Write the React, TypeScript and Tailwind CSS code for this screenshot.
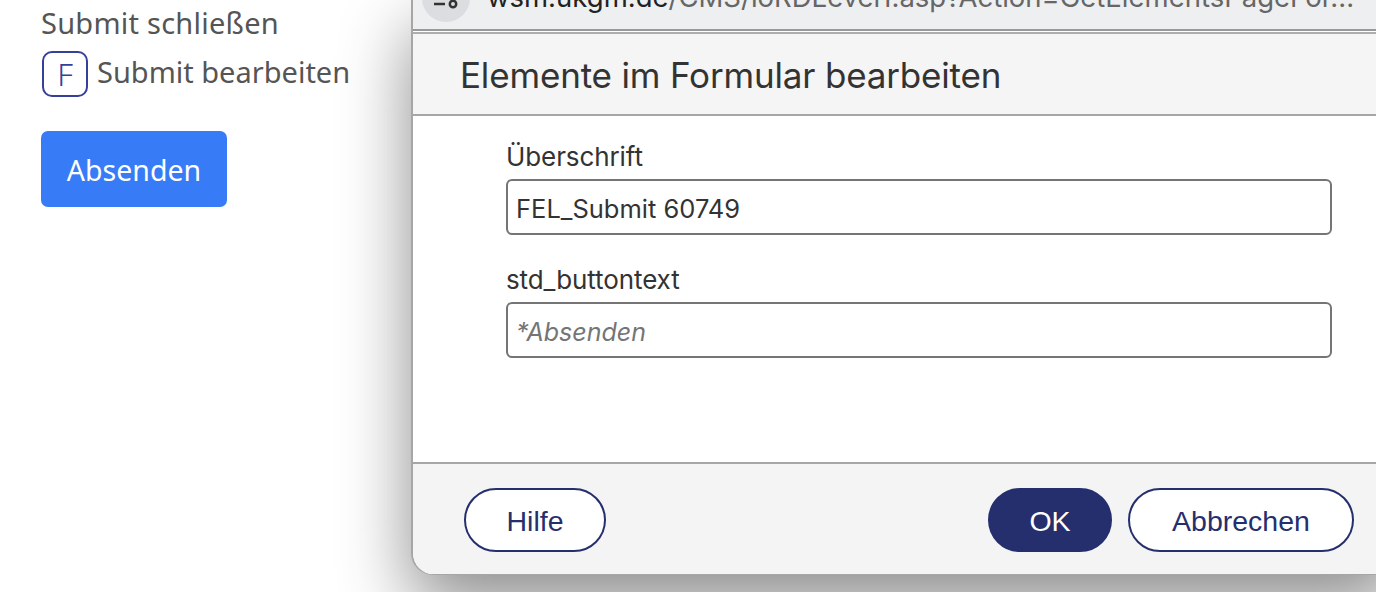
const inter = "font-['Inter',sans-serif]";

function Field({ label, value, italic }: { label: string; value: string; italic?: boolean }) {
  return (
    <div>
      <div className="h-[44px] text-[26px] leading-[44px] tracking-[-0.1px] text-[#333] font-['Inter',sans-serif]">{label}</div>
      <div
        className={`flex h-[56px] w-[826px] items-center rounded-[6px] border-2 border-[#757575] bg-white pl-[8px] pt-[5px] font-['Inter',sans-serif] ${
          italic ? "text-[25px] italic text-[#757575]" : "text-[25.5px] text-[#333]"
        }`}
      >
        {value}
      </div>
    </div>
  );
}

function PillButton({ label, primary, width }: { label: string; primary?: boolean; width: string }) {
  return (
    <button
      className={`h-[64px] rounded-full border-2 border-[#252f6e] pt-[2px] text-[28.5px] font-['Liberation_Sans',sans-serif] ${width} ${
        primary ? "bg-[#252f6e] text-white" : "bg-white text-[#252f6e]"
      }`}
    >
      {label}
    </button>
  );
}

export default function App() {
  return (
    <div className="flex h-[592px] w-[1376px] overflow-hidden bg-white">
      {/* Page behind the dialog */}
      <div className="w-[411px] shrink-0 pl-[41px] font-['Noto_Sans',sans-serif] text-[#555]">
        <div className="h-[49px] text-[29px] leading-[46px] tracking-[0.25px]">Submit schließen</div>
        <div className="mt-[1px] flex h-[48px] items-center gap-[9px] pl-[1px]">
          <span className="flex h-[46px] w-[46px] items-center justify-center rounded-[10px] border-2 border-[#36409a] text-[31px] font-light text-[#36409a]">
            F
          </span>
          <span className="-mt-[4px] text-[29px]">Submit bearbeiten</span>
        </div>
        <button className="mt-[33px] h-[76px] w-[186px] rounded-[7px] bg-[#377bf7] pt-[2px] text-[28.5px] text-white">
          Absenden
        </button>
      </div>

      {/* Dialog window */}
      <div className="relative mb-[17px] flex w-[990px] shrink-0 flex-col overflow-hidden rounded-bl-[22px] border-b border-l-2 border-[#a6a6a6] bg-white shadow-[0_30px_70px_rgba(0,0,0,0.45)]">
        <div className="flex h-[29px] shrink-0 items-end gap-[17px] overflow-hidden bg-[#eeeff1] pl-[9px]">
          <div className="mb-[7px] flex h-[48px] w-[48px] shrink-0 items-end justify-center rounded-full bg-[#dcdde0] pb-[13px]">
            <svg width="24" height="10" viewBox="0 0 24 10" fill="none" stroke="#333" strokeWidth="2.5">
              <path d="M0 5H11" />
              <circle cx="19" cy="5" r="3.2" />
            </svg>
          </div>
          <div className={`mb-[12px] whitespace-nowrap text-[27.5px] leading-[40px] text-[#666] ${inter}`}>
            <span className="text-[#222]">wsm.ukgm.de</span>/CMS/ioRDLevel1.asp?Action=GetElementsPageFor...
          </div>
        </div>
        <div className="h-[5px] shrink-0 border-t-2 border-b-2 border-t-[#999] border-b-[#aeaeb0] bg-white" />
        <div className="flex h-[82px] shrink-0 items-center border-b-2 border-[#a6a6a6] bg-[#f5f5f5] pl-[47px] pt-[3px]">
          <h1 className={`text-[35px] tracking-[-0.17px] text-[#333] ${inter}`}>Elemente im Formular bearbeiten</h1>
        </div>
        <div className="flex flex-1 flex-col gap-[23px] pl-[93px] pt-[19px]">
          <Field label="Überschrift" value="FEL_Submit 60749" />
          <Field label="std_buttontext" value="*Absenden" italic />
        </div>
        <div className="flex h-[112px] shrink-0 items-center justify-between border-t-2 border-[#a6a6a6] bg-[#f4f4f4] pl-[51px] pr-[47px] pt-[2px]">
          <PillButton label="Hilfe" width="w-[142px]" />
          <div className="flex gap-[16px]">
            <PillButton label="OK" primary width="w-[124px]" />
            <PillButton label="Abbrechen" width="w-[226px]" />
          </div>
        </div>
      </div>
    </div>
  );
}
